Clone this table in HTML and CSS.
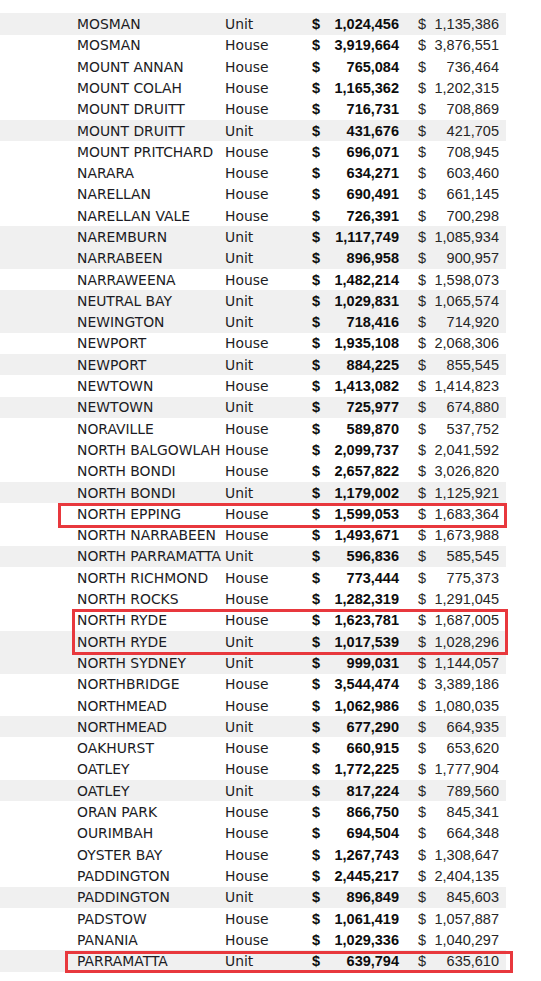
FILE: index.html
```html
<!DOCTYPE html>
<html>
<head>
<meta charset="utf-8">
<link rel="stylesheet" href="styles.css">
</head>
<body>
<div class="sheet">
  <div class="table">
    <div class="row unit"><span class="name">MOSMAN</span><span class="type">Unit</span><span class="d b">$</span><span class="v b">1,024,456</span><span class="d">$</span><span class="v">1,135,386</span></div>
    <div class="row"><span class="name">MOSMAN</span><span class="type">House</span><span class="d b">$</span><span class="v b">3,919,664</span><span class="d">$</span><span class="v">3,876,551</span></div>
    <div class="row"><span class="name">MOUNT ANNAN</span><span class="type">House</span><span class="d b">$</span><span class="v b">765,084</span><span class="d">$</span><span class="v">736,464</span></div>
    <div class="row"><span class="name">MOUNT COLAH</span><span class="type">House</span><span class="d b">$</span><span class="v b">1,165,362</span><span class="d">$</span><span class="v">1,202,315</span></div>
    <div class="row"><span class="name">MOUNT DRUITT</span><span class="type">House</span><span class="d b">$</span><span class="v b">716,731</span><span class="d">$</span><span class="v">708,869</span></div>
    <div class="row unit"><span class="name">MOUNT DRUITT</span><span class="type">Unit</span><span class="d b">$</span><span class="v b">431,676</span><span class="d">$</span><span class="v">421,705</span></div>
    <div class="row"><span class="name">MOUNT PRITCHARD</span><span class="type">House</span><span class="d b">$</span><span class="v b">696,071</span><span class="d">$</span><span class="v">708,945</span></div>
    <div class="row"><span class="name">NARARA</span><span class="type">House</span><span class="d b">$</span><span class="v b">634,271</span><span class="d">$</span><span class="v">603,460</span></div>
    <div class="row"><span class="name">NARELLAN</span><span class="type">House</span><span class="d b">$</span><span class="v b">690,491</span><span class="d">$</span><span class="v">661,145</span></div>
    <div class="row"><span class="name">NARELLAN VALE</span><span class="type">House</span><span class="d b">$</span><span class="v b">726,391</span><span class="d">$</span><span class="v">700,298</span></div>
    <div class="row unit"><span class="name">NAREMBURN</span><span class="type">Unit</span><span class="d b">$</span><span class="v b">1,117,749</span><span class="d">$</span><span class="v">1,085,934</span></div>
    <div class="row unit"><span class="name">NARRABEEN</span><span class="type">Unit</span><span class="d b">$</span><span class="v b">896,958</span><span class="d">$</span><span class="v">900,957</span></div>
    <div class="row"><span class="name">NARRAWEENA</span><span class="type">House</span><span class="d b">$</span><span class="v b">1,482,214</span><span class="d">$</span><span class="v">1,598,073</span></div>
    <div class="row unit"><span class="name">NEUTRAL BAY</span><span class="type">Unit</span><span class="d b">$</span><span class="v b">1,029,831</span><span class="d">$</span><span class="v">1,065,574</span></div>
    <div class="row unit"><span class="name">NEWINGTON</span><span class="type">Unit</span><span class="d b">$</span><span class="v b">718,416</span><span class="d">$</span><span class="v">714,920</span></div>
    <div class="row"><span class="name">NEWPORT</span><span class="type">House</span><span class="d b">$</span><span class="v b">1,935,108</span><span class="d">$</span><span class="v">2,068,306</span></div>
    <div class="row unit"><span class="name">NEWPORT</span><span class="type">Unit</span><span class="d b">$</span><span class="v b">884,225</span><span class="d">$</span><span class="v">855,545</span></div>
    <div class="row"><span class="name">NEWTOWN</span><span class="type">House</span><span class="d b">$</span><span class="v b">1,413,082</span><span class="d">$</span><span class="v">1,414,823</span></div>
    <div class="row unit"><span class="name">NEWTOWN</span><span class="type">Unit</span><span class="d b">$</span><span class="v b">725,977</span><span class="d">$</span><span class="v">674,880</span></div>
    <div class="row"><span class="name">NORAVILLE</span><span class="type">House</span><span class="d b">$</span><span class="v b">589,870</span><span class="d">$</span><span class="v">537,752</span></div>
    <div class="row"><span class="name">NORTH BALGOWLAH</span><span class="type">House</span><span class="d b">$</span><span class="v b">2,099,737</span><span class="d">$</span><span class="v">2,041,592</span></div>
    <div class="row"><span class="name">NORTH BONDI</span><span class="type">House</span><span class="d b">$</span><span class="v b">2,657,822</span><span class="d">$</span><span class="v">3,026,820</span></div>
    <div class="row unit"><span class="name">NORTH BONDI</span><span class="type">Unit</span><span class="d b">$</span><span class="v b">1,179,002</span><span class="d">$</span><span class="v">1,125,921</span></div>
    <div class="row"><span class="name">NORTH EPPING</span><span class="type">House</span><span class="d b">$</span><span class="v b">1,599,053</span><span class="d">$</span><span class="v">1,683,364</span></div>
    <div class="row"><span class="name">NORTH NARRABEEN</span><span class="type">House</span><span class="d b">$</span><span class="v b">1,493,671</span><span class="d">$</span><span class="v">1,673,988</span></div>
    <div class="row unit"><span class="name">NORTH PARRAMATTA</span><span class="type">Unit</span><span class="d b">$</span><span class="v b">596,836</span><span class="d">$</span><span class="v">585,545</span></div>
    <div class="row"><span class="name">NORTH RICHMOND</span><span class="type">House</span><span class="d b">$</span><span class="v b">773,444</span><span class="d">$</span><span class="v">775,373</span></div>
    <div class="row"><span class="name">NORTH ROCKS</span><span class="type">House</span><span class="d b">$</span><span class="v b">1,282,319</span><span class="d">$</span><span class="v">1,291,045</span></div>
    <div class="row"><span class="name">NORTH RYDE</span><span class="type">House</span><span class="d b">$</span><span class="v b">1,623,781</span><span class="d">$</span><span class="v">1,687,005</span></div>
    <div class="row unit"><span class="name">NORTH RYDE</span><span class="type">Unit</span><span class="d b">$</span><span class="v b">1,017,539</span><span class="d">$</span><span class="v">1,028,296</span></div>
    <div class="row unit"><span class="name">NORTH SYDNEY</span><span class="type">Unit</span><span class="d b">$</span><span class="v b">999,031</span><span class="d">$</span><span class="v">1,144,057</span></div>
    <div class="row"><span class="name">NORTHBRIDGE</span><span class="type">House</span><span class="d b">$</span><span class="v b">3,544,474</span><span class="d">$</span><span class="v">3,389,186</span></div>
    <div class="row"><span class="name">NORTHMEAD</span><span class="type">House</span><span class="d b">$</span><span class="v b">1,062,986</span><span class="d">$</span><span class="v">1,080,035</span></div>
    <div class="row unit"><span class="name">NORTHMEAD</span><span class="type">Unit</span><span class="d b">$</span><span class="v b">677,290</span><span class="d">$</span><span class="v">664,935</span></div>
    <div class="row"><span class="name">OAKHURST</span><span class="type">House</span><span class="d b">$</span><span class="v b">660,915</span><span class="d">$</span><span class="v">653,620</span></div>
    <div class="row"><span class="name">OATLEY</span><span class="type">House</span><span class="d b">$</span><span class="v b">1,772,225</span><span class="d">$</span><span class="v">1,777,904</span></div>
    <div class="row unit"><span class="name">OATLEY</span><span class="type">Unit</span><span class="d b">$</span><span class="v b">817,224</span><span class="d">$</span><span class="v">789,560</span></div>
    <div class="row"><span class="name">ORAN PARK</span><span class="type">House</span><span class="d b">$</span><span class="v b">866,750</span><span class="d">$</span><span class="v">845,341</span></div>
    <div class="row"><span class="name">OURIMBAH</span><span class="type">House</span><span class="d b">$</span><span class="v b">694,504</span><span class="d">$</span><span class="v">664,348</span></div>
    <div class="row"><span class="name">OYSTER BAY</span><span class="type">House</span><span class="d b">$</span><span class="v b">1,267,743</span><span class="d">$</span><span class="v">1,308,647</span></div>
    <div class="row"><span class="name">PADDINGTON</span><span class="type">House</span><span class="d b">$</span><span class="v b">2,445,217</span><span class="d">$</span><span class="v">2,404,135</span></div>
    <div class="row unit"><span class="name">PADDINGTON</span><span class="type">Unit</span><span class="d b">$</span><span class="v b">896,849</span><span class="d">$</span><span class="v">845,603</span></div>
    <div class="row"><span class="name">PADSTOW</span><span class="type">House</span><span class="d b">$</span><span class="v b">1,061,419</span><span class="d">$</span><span class="v">1,057,887</span></div>
    <div class="row"><span class="name">PANANIA</span><span class="type">House</span><span class="d b">$</span><span class="v b">1,029,336</span><span class="d">$</span><span class="v">1,040,297</span></div>
    <div class="row unit"><span class="name">PARRAMATTA</span><span class="type">Unit</span><span class="d b">$</span><span class="v b">639,794</span><span class="d">$</span><span class="v">635,610</span></div>
  </div>
  <div class="mark mark-epping"></div>
  <div class="mark mark-ryde"></div>
  <div class="mark mark-parra"></div>
</div>
</body>
</html>
```

FILE: styles.css
```css
html, body {
  margin: 0;
  padding: 0;
  background: #ffffff;
}

.sheet {
  position: relative;
  width: 541px;
  height: 981px;
  overflow: hidden;
}

.table {
  padding-top: 13.4px;
  width: 506px;
}

.row {
  display: grid;
  grid-template-columns: 148px 87px 20px 67px 33px 67px;
  padding-left: 77px;
  padding-right: 7px;
  height: 21.3px;
  align-items: center;
  color: #1a1a1a;
  white-space: nowrap;
}

.row.unit {
  background: #f0f0f0;
}

.name, .type {
  font-family: "DejaVu Sans", sans-serif;
  font-size: 13.9px;
  color: #1c1c24;
  overflow: visible;
}

.d, .v {
  font-family: "Liberation Sans", Arial, sans-serif;
  font-size: 14.5px;
  color: #262626;
}

.d:not(.b) {
  padding-left: 19px;
}

.v {
  text-align: right;
}

.b {
  font-weight: bold;
  color: #0d0d0d;
}

.mark {
  position: absolute;
  border: 3px solid #e8383d;
  box-sizing: border-box;
}

.mark-epping {
  left: 58px;
  top: 503px;
  width: 449px;
  height: 25px;
}

.mark-ryde {
  left: 72px;
  top: 609px;
  width: 436px;
  height: 46px;
}

.mark-parra {
  left: 65px;
  top: 951px;
  width: 448px;
  height: 22px;
}
```
